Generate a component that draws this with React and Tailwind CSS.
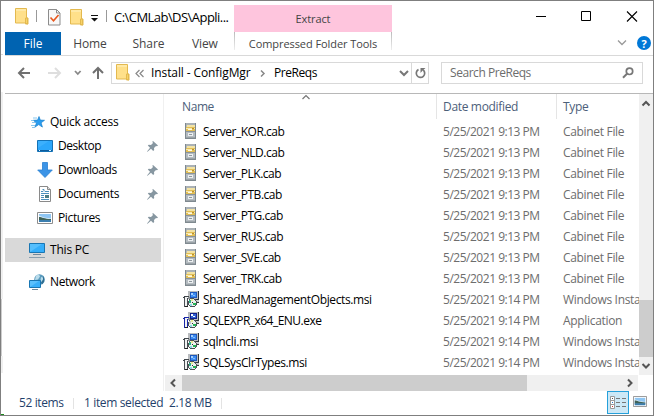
const Folder = ({ className = '' }) => (
  <svg className={`shrink-0 ${className}`} width="14" height="17" viewBox="0 0 14 17">
    <path d="M.5.5h11v9.500h1.500v6h-2.500v-1H.5z" fill="#ffe08a" stroke="#e3b94f" />
    <path d="M1 1h10v2H1z" fill="#ffe9a6" />
    <path d="M10.500 15V10h2v6z" fill="#f7d368" stroke="#e3b94f" />
  </svg>
);

const Check = () => (
  <svg className="shrink-0" width="13" height="17" viewBox="0 0 13 17">
    <path d="M.5.5h8l3.500 3.500v12H.5z" fill="#f8f8f8" stroke="#8c8c8c" />
    <path d="M8.500.5V4H12" fill="none" stroke="#8c8c8c" />
    <path d="M2.500 8.500l3 3.200L10.500 6" fill="none" stroke="#e8571c" strokeWidth="1.600" />
  </svg>
);

const Pin = () => (
  <svg className="shrink-0" width="11" height="11" viewBox="0 0 11 11">
    <path d="M6 0l5 4.500-1 .8-1-.3-2 2 .2 2-1 1L4 7.800.5 10.800 0 10.500 3 6.800.8 4.500l1-.8 2.200.2 2-2L5.300.8z" fill="#8797a1" />
  </svg>
);

const Star = () => (
  <svg width="16" height="16" viewBox="0 0 16 16">
    <path d="M9 2.500l1.300 3.600 4.200.2-3.400 2.500 1.300 4.300-3.700-2.500L5 13.100l1.400-4-3-2.800 4.200-.2z" fill="#2a9df0" stroke="#1580cf" strokeWidth=".7" />
    <path d="M3 4h4M1 6.500h3M2 8.500h3M1 11.500h4M2 13.500h3" stroke="#6bb9ea" strokeWidth=".8" />
  </svg>
);

const Desktop = () => (
  <svg width="16" height="16" viewBox="0 0 16 16">
    <path d="M.5 2.500h15v11H.5z" fill="#2ca7fb" stroke="#1472b6" />
    <path d="M1 10L12 3H1z" fill="#4cb9ff" opacity=".5" />
    <path d="M1 12.500h14" stroke="#0d5c9c" />
    <path d="M2 12.500h1M12 12.500h2" stroke="#d6efff" />
  </svg>
);

const Down = () => (
  <svg width="16" height="16" viewBox="0 0 16 16">
    <path d="M5.500.5h5v7.500h4.800L8 15.500.7 8h4.800z" fill="#3c94e6" stroke="#2880d2" strokeWidth=".8" />
  </svg>
);

const Doc = () => (
  <svg width="16" height="16" viewBox="0 0 16 16">
    <path d="M2.500.5h8l3 3v12h-11z" fill="#fff" stroke="#8a8a8a" />
    <path d="M10.500.5v3h3" fill="#ddd" stroke="#8a8a8a" />
    <path d="M4 5.500h2M5.500 3.500h1.500v2M8 5.500h4M4 7.500h8M4 9.500h3M4 11.500h3M4 13.500h8" fill="none" stroke="#4b91bd" />
    <path d="M8 9h4v3H8z" fill="#4d7c83" />
  </svg>
);

const Picture = ({ w = 16, h = 12 }) => (
  <svg width={w} height={h} viewBox="0 0 16 12" preserveAspectRatio="none">
    <path d="M.5.5h15v11H.5z" fill="#fff" stroke="#8d8d8d" />
    <path d="M2 2h12v8H2z" fill="#8fc6f3" />
    <path d="M2 3.500l5 2 7 1V8H2z" fill="#ddecf6" />
    <path d="M2 5c3 0 5 2 12 2v1.500H2z" fill="#3f6258" />
    <path d="M2 8h12v2H2z" fill="#3c7eaf" />
  </svg>
);

const PC = () => (
  <svg width="16" height="16" viewBox="0 0 16 16">
    <path d="M.5 1.500h15v9H.5z" fill="#35aefa" stroke="#1976b3" />
    <path d="M1 10V2h12z" fill="#68c8ff" opacity=".65" />
    <path d="M4 12.500h8" stroke="#70899c" />
    <path d="M0 15.500h16" stroke="#8a9fae" />
  </svg>
);

const Net = () => (
  <svg width="16" height="16" viewBox="0 0 16 16">
    <circle cx="10.500" cy="5.500" r="5.300" fill="#5b9bbd" />
    <path d="M7 1.500l3-1 1 2-2 3-3 .5zM12 3l3 1 .5 3-2 2.500-2-3z" fill="#b9dceb" />
    <path d="M14 2c2 3 2 6-1 8.500l-1-2 2-3z" fill="#316e91" />
    <path d="M.5 6.500h11v7H.5z" fill="#38affa" stroke="#1976b3" />
    <path d="M1 13V7h9z" fill="#72ccff" opacity=".6" />
    <path d="M3 15.500h6" stroke="#70899c" />
  </svg>
);

const Cab = () => (
  <svg className="shrink-0" width="16" height="16" viewBox="0 0 16 16" shapeRendering="crispEdges">
    <path d="M2 0h11v16H2z" fill="#7f898f" />
    <path d="M3 0h9v2H3z" fill="#aab1b6" />
    <path d="M3 2h9v13H3z" fill="#b4bbc0" />
    <path d="M4 2h8v2H4z" fill="#f3e3a4" />
    <path d="M3 4h9v4H3z" fill="#e2be55" />
    <path d="M3 5h9v1H3z" fill="#f8e9ae" />
    <path d="M5 6h4v1H5z" fill="#fffbe6" />
    <path d="M9 5h2v1H9z" fill="#b98f2d" />
    <path d="M3 8h9v1H3z" fill="#8a9399" />
    <path d="M5 10h5v3H5z" fill="#eceff0" />
    <path d="M6 11h3v1H6z" fill="#8f989e" />
    <path d="M3 14h9v1H3z" fill="#9ba3a8" />
  </svg>
);

const Setup = ({ exe }) => (
  <svg className="shrink-0" width="16" height="16" viewBox="0 0 16 16" shapeRendering="crispEdges">
    <path d="M5 0h10v8H5z" fill="#b9bcbf" />
    <path d="M15 0h1v9h-1zM8 8h8v1H8z" fill="#30353a" />
    <path d="M7 1h7v6H7z" fill={exe ? '#101f8c' : '#1d58bd'} />
    <path d="M8 2h5v4H8z" fill={exe ? '#2f62d4' : '#3c8cf0'} />
    <path d="M8 2h2v2H8z" fill={exe ? '#fff' : '#a6d1ff'} />
    <path d="M10 4h2v1h-2z" fill={exe ? '#fff' : '#83bcff'} />
    <path d="M9 9h7v2H9z" fill="#c9cbcc" />
    <path d="M9 11h7v1H9z" fill="#3a3d40" />
    <path d="M1 5h5v1H1zM0 6h2v1H0z" fill={exe ? '#1826a8' : '#42474c'} />
    <path d="M1 7h1v9H1zM4 7h1v9H4z" fill={exe ? '#1826a8' : '#4a4f54'} />
    <path d="M2 6h2v9H2z" fill="#f1f2f2" />
    <path d="M2 15h3v1H2z" fill="#222" />
    <path d="M5 6h2v2H5z" fill="#8b9196" />
    <path d="M7 7h4v1h2v2h1v4h-1v1h-1v1H7v-1H6v-1H5v-4h1V8h1z" fill="#4b5156" />
    <path d="M7 8h4v1h1v1h1v4h-1v1H7v-1H6V9h1z" fill="#eef1ee" />
    <path d="M6 9h2v3H6z" fill={exe ? '#c3c6c8' : '#2fae86'} />
    <path d="M8 8h2v2H8z" fill="#e9ed94" />
    <path d="M10 12h3v2h-3z" fill="#23b455" />
    <path d="M7 13h2v2H7z" fill="#8ed9e8" />
    <path d="M9 11h1v1H9z" fill="#333" />
  </svg>
);

const Chev = ({ d, w = 10, h = 10, c = '#555', s = 2, className = '' }) => (
  <svg className={`shrink-0 ${className}`} width={w} height={h} viewBox={`0 0 ${w} ${h}`}>
    <path d={d} fill="none" stroke={c} strokeWidth={s} />
  </svg>
);

const quick = [
  ['Desktop', Desktop, 'tracking-[-0.45px]'],
  ['Downloads', Down, 'tracking-[-0.42px]'],
  ['Documents', Doc, 'tracking-[-0.35px]'],
  ['Pictures', Picture, 'tracking-[-0.35px]'],
];

const files = [
  ...['KOR', 'NLD', 'PLK', 'PTB', 'PTG', 'RUS', 'SVE', 'TRK'].map((n) => [`Server_${n}.cab`, '5/25/2021 9:13 PM', 'Cabinet File', 'cab', 'tracking-[-0.48px]']),
  ['SharedManagementObjects.msi', '5/25/2021 9:14 PM', 'Windows Insta', 'msi', 'tracking-[-0.38px]'],
  ['SQLEXPR_x64_ENU.exe', '5/25/2021 9:14 PM', 'Application', 'exe', 'tracking-[-0.52px]'],
  ['sqlncli.msi', '5/25/2021 9:14 PM', 'Windows Insta', 'msi', 'tracking-[-0.28px]'],
  ['SQLSysClrTypes.msi', '5/25/2021 9:14 PM', 'Windows Insta', 'msi', 'tracking-[-0.42px]'],
];

function TitleBar() {
  return (
    <div className="flex h-[31px] shrink-0">
      <div className="flex w-[229px] items-start pl-[10px] pt-[7px]">
        <Folder />
        <div className="ml-[7px] mt-[2px] h-3 w-px bg-[#999]" />
        <div className="ml-[11px] mt-px"><Check /></div>
        <Folder className="ml-[9px] mt-px" />
        <svg className="ml-[7px] mt-[7px] shrink-0" width="7" height="7" viewBox="0 0 7 7">
          <path d="M0 0h7v1H0zM0 3h7L3.500 6.500z" fill="#111" />
        </svg>
        <div className="ml-2 mt-[2px] h-3 w-px bg-[#999]" />
        <div className="ml-[7px] whitespace-nowrap text-[13px] leading-[18px] tracking-[-0.54px]">C:\CMLab\DS\Appli...</div>
      </div>
      <div className="mt-1 flex h-[27px] w-[158px] items-center justify-center bg-[#fec5dd] text-[11px] tracking-[-0.1px] text-[#444]">Extract</div>
      <svg className="ml-auto mr-[14px] mt-[9px]" width="103" height="13" viewBox="0 0 103 13">
        <path d="M0 6.500h10" stroke="#000" />
        <path d="M45.500 1.500h9v9h-9z" fill="none" stroke="#000" />
        <path d="M91 1.500l10 10M101 1.500l-10 10" stroke="#000" strokeWidth="1.100" />
      </svg>
    </div>
  );
}

function Tabs() {
  return (
    <div className="flex h-[24px] shrink-0 border-b border-[#d9d9d9] leading-[23px] text-[#444]">
      <div className="w-[56px] bg-[#0063b1] text-center text-white">File</div>
      <div className="w-[58px] text-center tracking-[-0.1px]">Home</div>
      <div className="w-[59px] text-center tracking-[-0.1px]">Share</div>
      <div className="w-[56px] pl-[14px] tracking-[-0.1px]">View</div>
      <div className="h-[18px] w-px bg-gradient-to-b from-[#bbb] to-[#eee]" />
      <div className="w-[156px] whitespace-nowrap text-center text-[11px] tracking-[-0.07px]">Compressed Folder Tools</div>
      <div className="h-[18px] w-px bg-gradient-to-b from-[#bbb] to-[#eee]" />
      <Chev className="ml-auto mt-[6px]" d="M1 2.500l4 4 4-4" c="#999" s={1.3} />
      <div className="ml-[10px] mr-[2px] mt-[4px] flex h-[14px] w-[14px] items-center justify-center rounded-full bg-[#0078d7] text-[11px] font-bold leading-none text-white">?</div>
    </div>
  );
}

function AddressBar() {
  return (
    <div className="flex h-[37px] shrink-0 pt-[6px]">
      <svg className="shrink-0" width="106" height="22" viewBox="4 0 106 22">
        <g fill="none" strokeWidth="2">
          <path d="M29 11H18M23 6l-5 5 5 5" stroke="#707070" />
          <path d="M47 11h11M54 6l5 5-5 5" stroke="#dedede" />
          <path d="M74 9l2.800 3L79.600 9" stroke="#888" strokeWidth="1.800" />
          <path d="M97 17V6M92 11l5-5 5 5" stroke="#707070" />
        </g>
      </svg>
      <div className="flex h-[22px] w-[318px] border border-[#d9d9d9]">
        <Folder className="ml-1 mt-px" />
        <Chev className="ml-[5px] mt-[6px]" d="M4.500 1L1 4.500 4.500 8M8.500 1L5 4.500 8.500 8" c="#888" s={1.2} />
        <div className="ml-[6px] w-[107px] whitespace-nowrap leading-[20px] tracking-[-0.1px]">Install - ConfigMgr</div>
        <Chev className="ml-px mt-[6px]" d="M2 1.500l3 3-3 3" c="#888" s={1.5} />
        <div className="ml-[5px] leading-[20px] tracking-[-0.45px]">PreReqs</div>
        <Chev className="ml-auto mr-[2px] mt-[6px]" d="M1 2l4 4 4-4" c="#777" />
        <div className="flex w-[17px] justify-center border-l border-[#d9d9d9] pt-[4px]">
          <svg width="11" height="12" viewBox="0 0 11 12">
            <path d="M3.500 2.500a4.200 4.200 0 1 0 4.700.5" fill="none" stroke="#777" strokeWidth="1.700" />
            <path d="M0 1h5v5L3.300 4z" fill="#777" transform="translate(10.500 0) scale(-1 1)" />
          </svg>
        </div>
      </div>
      <div className="ml-[12px] flex h-[22px] w-[202px] justify-between border border-[#d9d9d9] pl-[8px] pr-2 leading-[20px] text-[#6d6d6d]">
        <span className="tracking-[-0.45px]">Search PreReqs</span>
        <svg className="mt-[4px]" width="12" height="12" viewBox="0 0 12 12">
          <circle cx="7.500" cy="4.300" r="3.200" fill="none" stroke="#777" strokeWidth="1.700" />
          <path d="M5 6.800L1 10.800" stroke="#777" strokeWidth="2" />
        </svg>
      </div>
    </div>
  );
}

function Nav() {
  return (
    <div className="w-[158px] shrink-0 pt-[16px]">
      <div className="flex h-6 items-center pl-[25px]"><Star /><span className="ml-[4px] tracking-[-0.22px]">Quick access</span></div>
      {quick.map(([name, Icon, t]) => (
        <div key={name} className="flex h-6 items-center pl-[32px] pr-[5px]">
          <Icon />
          <span className={`ml-[5px] ${t}`}>{name}</span>
          <span className="ml-auto"><Pin /></span>
        </div>
      ))}
      <div className="mt-[8px] flex h-6 w-[156px] items-center bg-[#d9d9d9] pl-[24px]"><PC /><span className="ml-[5px] tracking-[-0.2px]">This PC</span></div>
      <div className="mt-[8px] flex h-6 items-center pl-[24px]"><Net /><span className="ml-[5px] tracking-[-0.4px]">Network</span></div>
    </div>
  );
}

function FileList() {
  return (
    <div className="flex min-w-0 flex-1 flex-col border-l border-[#f0f0f0]">
      <div className="flex flex-1">
        <div className="w-[475px]">
          <div className="flex h-[25px] leading-[26px] text-[#4c607a]">
            <div className="flex w-[272px] pl-[18px]">
              <span className="w-[119px] tracking-[-0.4px]">Name</span>
              <Chev d="M1.500 5L5 1.500 8.500 5" c="#777" s={1.2} />
            </div>
            <div className="w-[120px] border-l border-[#e5e5e5] pl-[6px] tracking-[-0.33px]">Date modified</div>
            <div className="flex-1 border-l border-[#e5e5e5] pl-[6px] tracking-[-0.3px]">Type</div>
          </div>
          <div className="pt-[3px]">
            {files.map(([name, date, type, kind, t]) => (
              <div key={name} className="flex h-[21px] items-start whitespace-nowrap leading-[20px] text-[#6d6d6d]">
                <div className="flex w-[279px] items-start pl-[19px] text-black">
                  <span className="mt-px">{kind === 'cab' ? <Cab /> : <Setup exe={kind === 'exe'} />}</span>
                  <span className={`ml-[4px] ${t}`}>{name}</span>
                </div>
                <div className="w-[120px] tracking-[-0.48px]">{date}</div>
                <div className="w-[76px] tracking-[-0.32px]">{type}</div>
              </div>
            ))}
          </div>
        </div>
        <div className="flex w-[14px] flex-col items-center bg-[#f0f0f0]">
          <Chev className="mt-[5px]" d="M1.500 6.500L5 3l3.500 3.500" />
          <div className="mt-[191px] h-[57px] w-[14px] bg-[#cdcdcd]" />
          <Chev className="mt-[4px]" d="M1.500 3L5 6.500 8.500 3" />
        </div>
      </div>
      <div className="ml-[1px] mr-[15px] flex h-[16px] items-center bg-[#f0f0f0]">
        <Chev className="ml-[3px]" d="M7 1.500L3.500 5 7 8.500" />
        <div className="ml-[4px] h-4 w-[345px] bg-[#cdcdcd]" />
        <Chev className="ml-auto mr-[3px]" d="M3 1.500L6.500 5 3 8.500" />
      </div>
    </div>
  );
}

function StatusBar() {
  return (
    <div className="flex h-[24px] shrink-0 items-center pl-[14px] text-[#1f3f6b]">
      <span className="w-[54px] tracking-[-0.4px]">52 items</span>
      <div className="h-[11px] w-px bg-[#e3e3e3]" />
      <span className="w-[84px] whitespace-nowrap pl-[10px] tracking-[-0.36px]">1 item selected</span>
      <span className="w-[63px] whitespace-nowrap pl-[11px] tracking-[-0.4px]">2.18 MB</span>
      <div className="h-[11px] w-px bg-[#e3e3e3]" />
      <div className="ml-auto flex h-[23px] w-[22px] items-center justify-center self-start border border-[#26a0da] bg-[#cce8f6]">
        <svg width="18" height="13" viewBox="0 0 18 13" className="shrink-0">
          <path d="M1.500.5h4v12h-4zM1.500 4.500h4M1.500 8.500h4" fill="#fff" stroke="#999" />
          <path d="M7 2.500h4M13 2.500h4M7 6.500h4M13 6.500h4M7 10.500h4M13 10.500h4" stroke="#777" />
          <path d="M3 6h1v1H3z" fill="#27c" />
          <path d="M3 10h1v1H3z" fill="#c33" />
          <path d="M3 2h1v1H3z" fill="#555" />
        </svg>
      </div>
      <div className="ml-[4px] mr-[6px] mt-[5px] self-start"><Picture w={14} h={11} /></div>
    </div>
  );
}

// Sliver of the neighbouring window's frame and scroll bar.
function EdgeStrip() {
  return (
    <div className="flex w-1 shrink-0 flex-col items-start">
      <div className="mt-[53px] h-px w-[2px] bg-[#d9d9d9]" />
      <div className="mt-[37px] h-[207px] w-[2px] bg-[#f0f0f0]" />
      <div className="h-[57px] w-[1px] bg-[#cdcdcd]" />
      <div className="h-[17px] w-[2px] bg-[#f0f0f0]" />
      <div className="mt-auto h-px w-[3px] bg-[#1c8a1c]" />
    </div>
  );
}

export default function App() {
  return (
    <div className="flex h-[416px] w-[654px] overflow-hidden border border-[#7f7f7f] bg-white font-['Open_Sans','Noto_Sans',sans-serif] text-[12px] leading-4 text-black">
      <EdgeStrip />
      <div className="flex min-w-0 flex-1 flex-col">
        <TitleBar />
        <Tabs />
        <AddressBar />
        <div className="h-px shrink-0 bg-[#b8b8b8]" />
        <div className="flex min-h-0 flex-1">
          <Nav />
          <FileList />
        </div>
        <StatusBar />
      </div>
    </div>
  );
}
